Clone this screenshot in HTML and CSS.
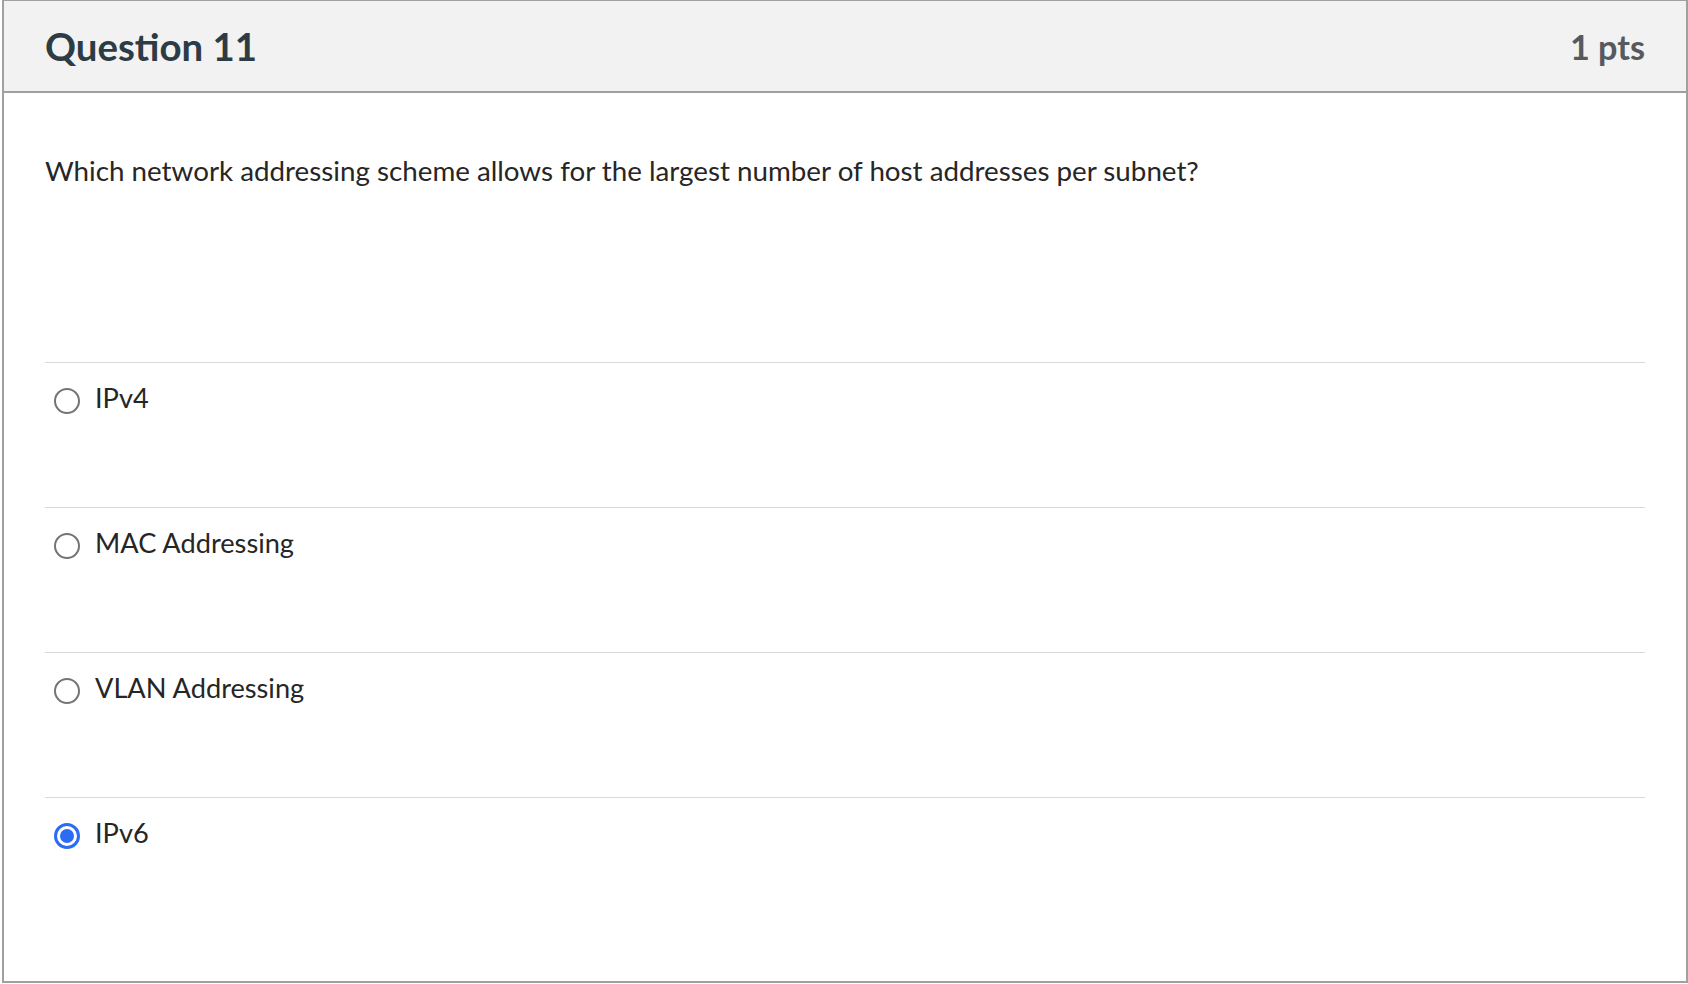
FILE: index.html
```html
<!DOCTYPE html>
<html>
<head>
<meta charset="utf-8">
<link rel="stylesheet" href="styles.css">
</head>
<body>
<div class="card">
  <div class="card-header">
    <h2 class="q-title">Question 11</h2>
    <span class="q-points">1 pts</span>
  </div>
  <div class="card-body">
    <div class="q-text">Which network addressing scheme allows for the largest number of host addresses per subnet?</div>
    <div class="answers">
      <label class="answer"><span class="radio"></span><span class="answer-label">IPv4</span></label>
      <label class="answer"><span class="radio"></span><span class="answer-label">MAC Addressing</span></label>
      <label class="answer"><span class="radio"></span><span class="answer-label">VLAN Addressing</span></label>
      <label class="answer"><span class="radio checked"></span><span class="answer-label">IPv6</span></label>
    </div>
  </div>
</div>
</body>
</html>
```

FILE: styles.css
```css
html, body {
  margin: 0;
  padding: 0;
  background: #ffffff;
}
body {
  font-family: Lato, "Open Sans", sans-serif;
  color: #2d3b45;
}
.card {
  box-sizing: border-box;
  width: 1686px;
  height: 983px;
  margin-left: 2px;
  border: 2px solid #a0a0a0;
  border-top-width: 1px;
  display: flex;
  flex-direction: column;
}
.card-header {
  box-sizing: border-box;
  height: 92px;
  background: #f2f2f2;
  border-bottom: 2px solid #a0a0a0;
  display: flex;
  align-items: center;
  justify-content: space-between;
  padding: 0 41px;
}
.q-title {
  margin: 0;
  font-size: 38.4px;
  font-weight: 700;
  color: #2d3b45;
}
.q-points {
  font-size: 34.2px;
  font-weight: 700;
  color: #555a5f;
}
.card-body {
  padding: 0 41px;
}
.q-text {
  box-sizing: border-box;
  height: 269px;
  padding-top: 60px;
  font-size: 27.75px;
  line-height: 36px;
  color: #262626;
}
.answers {
  display: flex;
  flex-direction: column;
}
.answer {
  box-sizing: border-box;
  height: 145px;
  border-top: 1px solid #d9d9d9;
  display: flex;
  align-items: flex-start;
  padding-top: 20px;
  padding-left: 9px;
  gap: 15px;
}
.radio {
  box-sizing: border-box;
  width: 26px;
  height: 26px;
  margin-top: 5px;
  border: 2px solid #747474;
  border-radius: 50%;
  flex: none;
  display: flex;
  align-items: center;
  justify-content: center;
}
.radio.checked {
  border: 3px solid #2c6cf5;
}
.radio.checked::after {
  content: "";
  width: 14px;
  height: 14px;
  border-radius: 50%;
  background: #2c6cf5;
}
.answer-label {
  font-size: 27.2px;
  line-height: 30px;
  color: #262626;
}
```
